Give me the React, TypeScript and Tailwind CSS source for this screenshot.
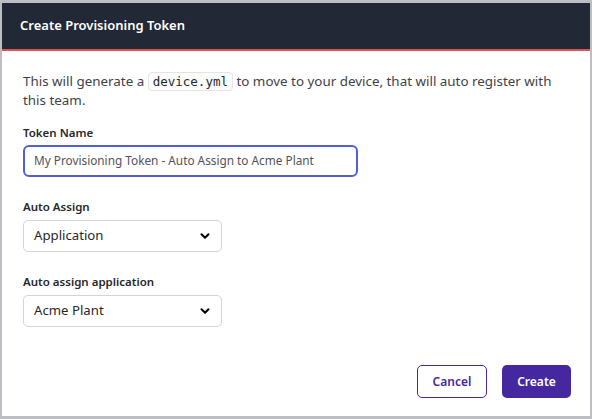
import { ChevronDown } from "lucide-react";

function Select({ value }: { value: string }) {
  return (
    <div className="flex h-[32px] w-[199px] items-center justify-between rounded-[5px] border border-[#d4d4d8] bg-white pl-[10px] pr-[9px]">
      <span className="text-[13.2px] text-[#27272a]">{value}</span>
      <ChevronDown className="h-[14px] w-[14px] text-black" strokeWidth={3.4} />
    </div>
  );
}

export default function App() {
  return (
    <div
      className="h-[419px] w-[592px] bg-[#bcbec4] pb-[3px] pl-[2px] pr-[2px] pt-[3px]"
      style={{ fontFamily: '"Noto Sans", "Open Sans", sans-serif' }}
    >
      <div className="flex h-full flex-col bg-white">
        <div className="flex h-[48px] items-center border-b-[2px] border-[#e05353] bg-[#222836] px-[18px]">
          <h1 className="text-[13px] font-semibold text-white">
            Create Provisioning Token
          </h1>
        </div>

        <div className="flex flex-1 flex-col pl-[21px] pr-[19px] pt-[21px]">
          <p className="text-[13.4px] leading-[19px] text-[#3f3f46]">
            This will generate a{" "}
            <code
              className="rounded-[4px] border border-[#e4e4e7] bg-[#fcfcfc] px-[4px] py-[1px] text-[12.5px] text-[#27272a]"
              style={{ fontFamily: '"DejaVu Sans Mono", monospace' }}
            >
              device.yml
            </code>{" "}
            to move to your device, that will auto register with this team.
          </p>

          <label className="mt-[15px] text-[11.5px] font-semibold leading-[16px] text-[#27272a]">
            Token Name
          </label>
          <div className="mt-[4px] flex h-[32px] w-[335px] items-center rounded-[6px] border-[2px] border-[#4f5fdc] px-[9px]">
            <span className="text-[11.8px] text-[#52525b]">
              My Provisioning Token - Auto Assign to Acme Plant
            </span>
          </div>

          <label className="mt-[22px] text-[11.5px] font-semibold leading-[16px] text-[#27272a]">
            Auto Assign
          </label>
          <div className="mt-[5px]">
            <Select value="Application" />
          </div>

          <label className="mt-[22px] text-[11.5px] font-semibold leading-[16px] text-[#27272a]">
            Auto assign application
          </label>
          <div className="mt-[5px]">
            <Select value="Acme Plant" />
          </div>

          <div className="mt-auto flex justify-end gap-[15px] pb-[18px]">
            <button className="h-[33px] w-[70px] rounded-[5px] border border-[#4527a0] bg-white text-[12px] font-semibold text-[#4527a0]">
              Cancel
            </button>
            <button className="h-[33px] w-[69px] rounded-[5px] bg-[#4527a0] text-[12px] font-semibold text-white">
              Create
            </button>
          </div>
        </div>
      </div>
    </div>
  );
}
